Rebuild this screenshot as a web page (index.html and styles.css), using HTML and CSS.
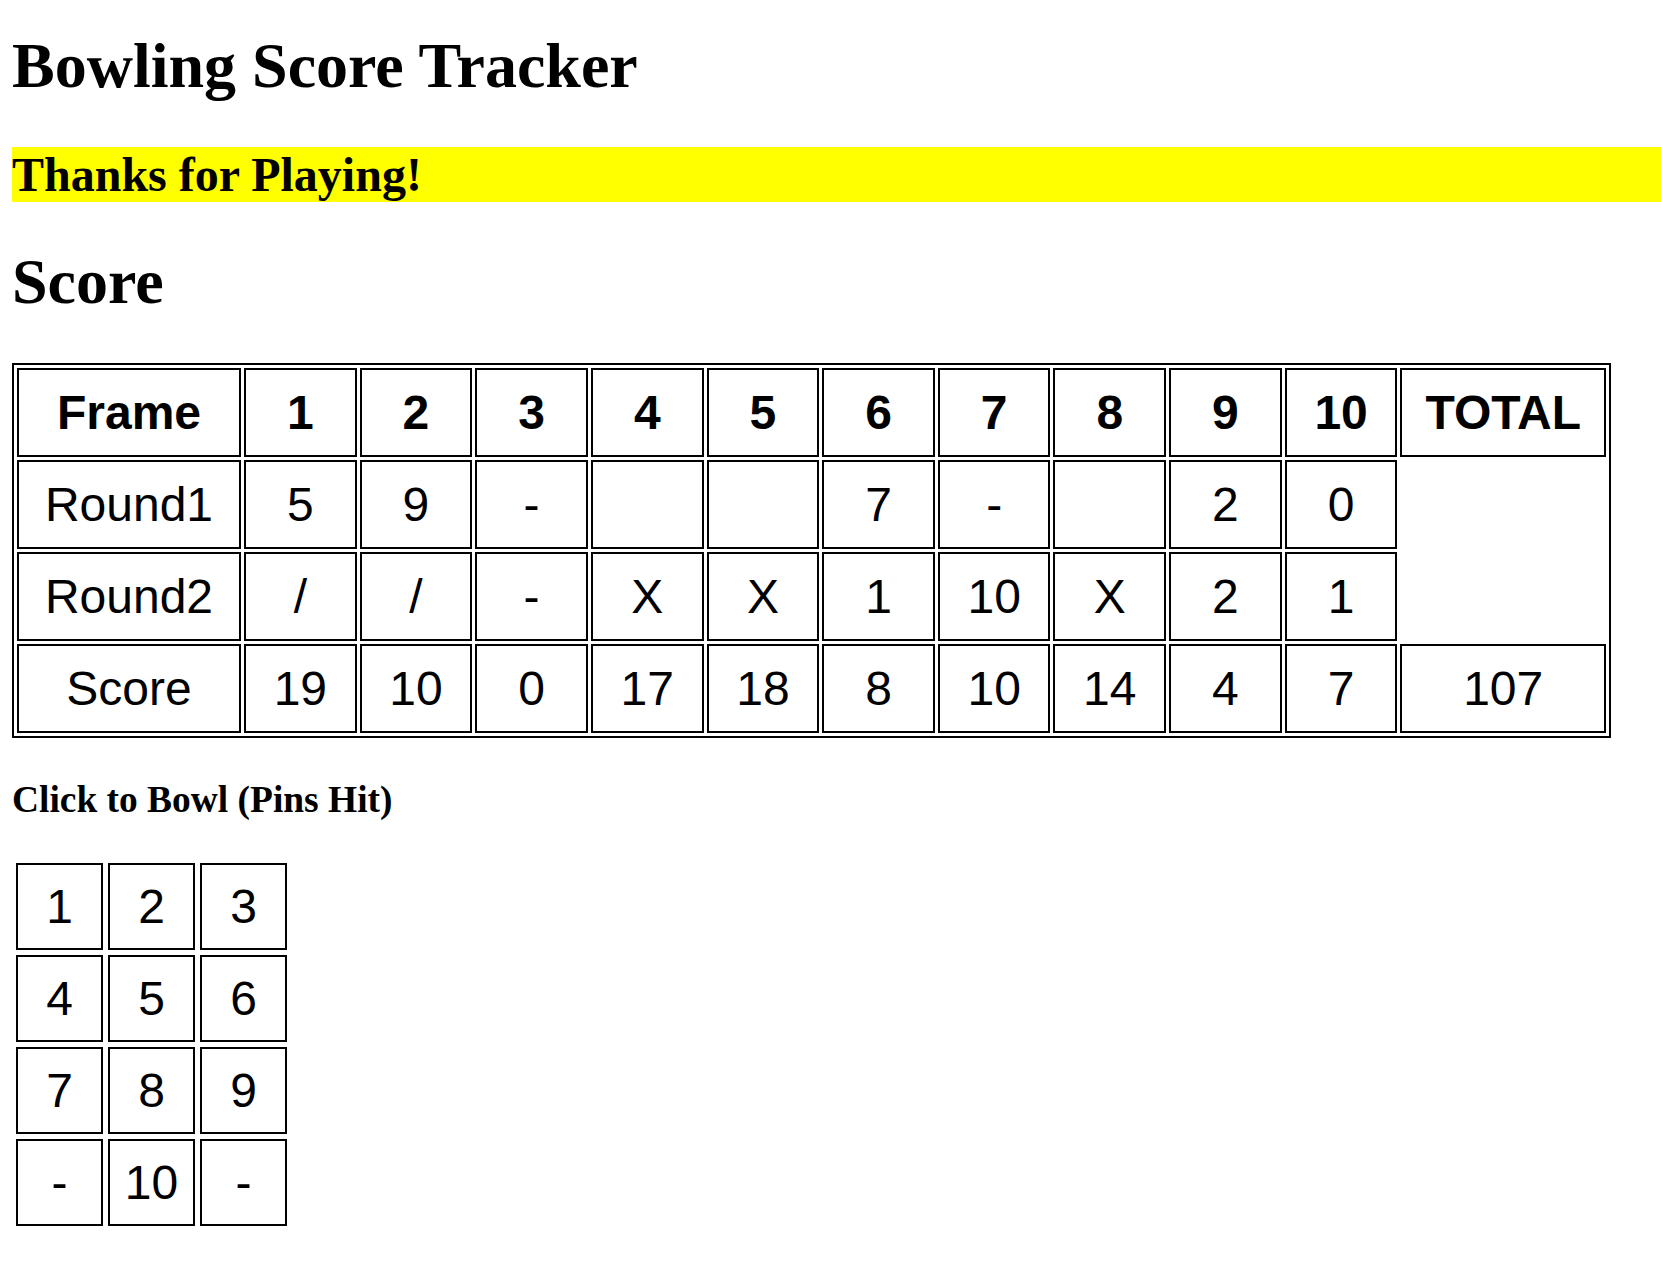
FILE: index.html
```html
<!DOCTYPE html>
<html lang="en">
<head>
<meta charset="utf-8">
<title>Bowling Score Tracker</title>
<link rel="stylesheet" href="styles.css">
</head>
<body>
<h1 class="title">Bowling Score Tracker</h1>
<h2 class="banner">Thanks for Playing!</h2>
<h1 class="section">Score</h1>
<table class="scores">
  <tr>
    <th class="c-frame">Frame</th>
    <th class="c-num">1</th>
    <th class="c-num">2</th>
    <th class="c-num">3</th>
    <th class="c-num">4</th>
    <th class="c-num">5</th>
    <th class="c-num">6</th>
    <th class="c-num">7</th>
    <th class="c-num">8</th>
    <th class="c-num">9</th>
    <th class="c-num">10</th>
    <th class="c-total">TOTAL</th>
  </tr>
  <tr>
    <td>Round1</td>
    <td>5</td><td>9</td><td>-</td><td></td><td></td><td>7</td><td>-</td><td></td><td>2</td><td>0</td>
  </tr>
  <tr>
    <td>Round2</td>
    <td>/</td><td>/</td><td>-</td><td>X</td><td>X</td><td>1</td><td>10</td><td>X</td><td>2</td><td>1</td>
  </tr>
  <tr>
    <td>Score</td>
    <td>19</td><td>10</td><td>0</td><td>17</td><td>18</td><td>8</td><td>10</td><td>14</td><td>4</td><td>7</td>
    <td>107</td>
  </tr>
</table>
<h3 class="bowl-title">Click to Bowl (Pins Hit)</h3>
<div class="pins">
  <button class="pin">1</button>
  <button class="pin">2</button>
  <button class="pin">3</button>
  <button class="pin">4</button>
  <button class="pin">5</button>
  <button class="pin">6</button>
  <button class="pin">7</button>
  <button class="pin">8</button>
  <button class="pin">9</button>
  <button class="pin">-</button>
  <button class="pin">10</button>
  <button class="pin">-</button>
</div>
</body>
</html>
```
FILE: styles.css
```css
html, body {
  background: #fff;
}
body {
  margin: 0 0 0 12px;
  font-family: "Liberation Serif", "Times New Roman", serif;
  font-size: 32px;
  color: #000;
}
.title {
  font-size: 64px;
  font-weight: bold;
  margin: 29px 0 44px;
}
.banner {
  font-size: 48px;
  font-weight: bold;
  background: #ffff00;
  margin: 0;
}
.section {
  font-size: 64px;
  font-weight: bold;
  margin: 42.88px 0 44px;
}
.scores {
  table-layout: fixed;
  width: 1599px;
  border: 2px solid #000;
  border-spacing: 3px;
  font-family: "Liberation Sans", Arial, sans-serif;
  font-size: 48px;
}
.scores th,
.scores td {
  box-sizing: border-box;
  border: 2px solid #000;
  padding: 15px 0;
  text-align: center;
  line-height: normal;
}
.scores th {
  font-weight: bold;
}
.c-frame { width: 224px; }
.c-num { width: 112.65px; }
.c-total { width: 205.5px; }
.bowl-title {
  font-size: 37.44px;
  font-weight: bold;
  margin: 40.5px 0 0;
}
.pins {
  display: grid;
  grid-template-columns: repeat(3, 87px);
  grid-auto-rows: 87px;
  gap: 5px;
  margin: 41.5px 0 0 4px;
}
.pin {
  box-sizing: border-box;
  margin: 0;
  padding: 0;
  background: #fff;
  border: 2px solid #000;
  font-family: "Liberation Sans", Arial, sans-serif;
  font-size: 48px;
  color: #000;
}
```
